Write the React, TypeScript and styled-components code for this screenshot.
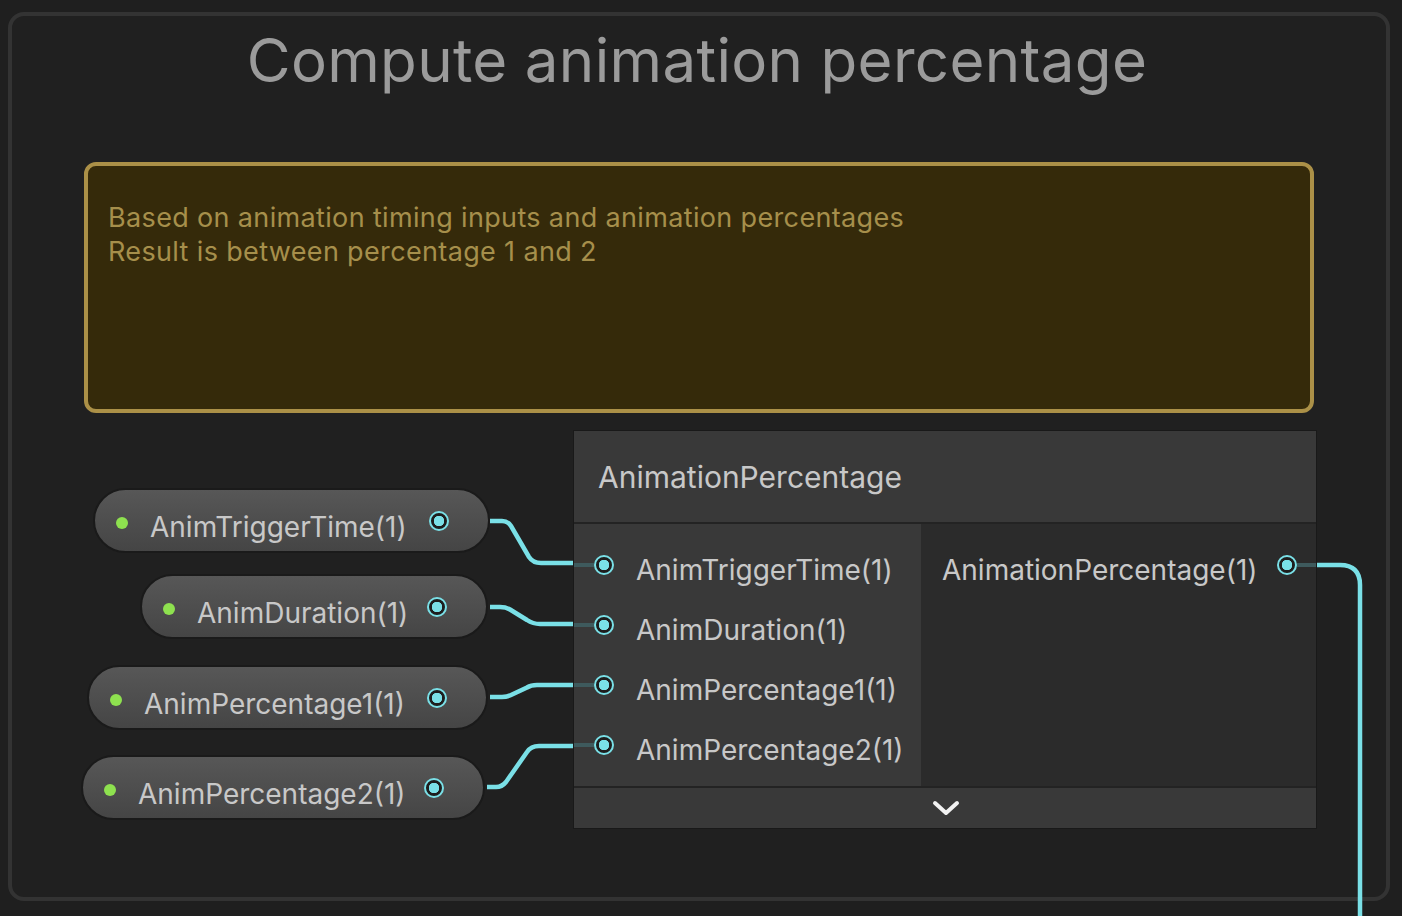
import React from 'react';
import styled, { createGlobalStyle } from 'styled-components';

const GlobalStyle = createGlobalStyle`
  html, body {
    margin: 0;
    padding: 0;
    background: #1f1f1f;
    font-family: Inter, "Noto Sans", "Liberation Sans", sans-serif;
  }
`;

const CYAN = '#7ae0e7';
const STUB = '#3e5a5d';

interface PropertyNode {
  label: string;
  x: number;
  y: number;
  w: number;
}

const properties: PropertyNode[] = [
  { label: 'AnimTriggerTime(1)', x: 93, y: 488, w: 397 },
  { label: 'AnimDuration(1)', x: 140, y: 574, w: 348 },
  { label: 'AnimPercentage1(1)', x: 87, y: 665, w: 401 },
  { label: 'AnimPercentage2(1)', x: 81, y: 755, w: 404 },
];

const inputs = ['AnimTriggerTime(1)', 'AnimDuration(1)', 'AnimPercentage1(1)', 'AnimPercentage2(1)'];

// wires drawn by hand from the pill outputs to the node inputs
const wires = [
  'M490 521 L502 521 Q508 521 511 526 L529 557 Q533 563 541 563 L575 563',
  'M490 607 L500 607 Q506 607 510 609.5 L527 620 Q533 624 540 624 L575 624',
  'M490 697 L502 697 Q507 697 511 695 L527 687.5 Q531 685 537 685 L575 685',
  'M487 787 L496 787 Q502 787 506 782 L527 752 Q531 746 539 746 L575 746',
  'M1317 565 L1340 565 Q1360 565 1360 585 L1360 920',
];

const Canvas = styled.div`
  position: relative;
  width: 1402px;
  height: 916px;
  overflow: hidden;
  padding-top: 12px;
  box-sizing: border-box;
`;

const GroupFrame = styled.div`
  margin-left: 8px;
  width: 1382px;
  height: 889px;
  box-sizing: border-box;
  border: 4px solid #333333;
  border-radius: 16px;
  background: #202020;
  padding-top: 8px;
`;

const GroupTitle = styled.div`
  font-size: 60px;
  line-height: 72px;
  letter-spacing: 0.33px;
  color: #9b9b9b;
  text-align: center;
  padding-right: 4px;
`;

const StickyNote = styled.div`
  margin: 66px 0 0 72px;
  width: 1230px;
  height: 251px;
  box-sizing: border-box;
  border: 4px solid #ab9047;
  border-radius: 12px;
  background: #352a0a;
  padding: 35px 20px;
  color: #a68f4b;
  font-size: 27px;
  line-height: 34px;
  letter-spacing: 0.35px;
`;

const WireLayer = styled.svg`
  position: absolute;
  left: 0;
  top: 0;
  pointer-events: none;
  z-index: 1;
`;

const Pill = styled.div<{ $x: number; $y: number; $w: number }>`
  position: absolute;
  left: ${(p) => p.$x}px;
  top: ${(p) => p.$y}px;
  width: ${(p) => p.$w}px;
  height: 65px;
  box-sizing: border-box;
  border: 2px solid #1a1a1a;
  border-radius: 33px;
  background: linear-gradient(#575757, #454545);
  display: flex;
  align-items: center;
  padding: 0 39px 0 21px;
  z-index: 2;
`;

const Dot = styled.span`
  width: 12px;
  height: 12px;
  border-radius: 50%;
  background: #8ee14f;
  margin: 4px 22px 0 0;
  flex-shrink: 0;
`;

const PillLabel = styled.span`
  flex: 1;
  font-size: 28px;
  color: #c8c8c8;
  margin-top: 12px;
  white-space: nowrap;
`;

const Port = styled.span<{ $stub?: 'left' | 'right' }>`
  position: relative;
  width: 20px;
  height: 20px;
  box-sizing: border-box;
  border-radius: 50%;
  border: 2px solid ${CYAN};
  background: radial-gradient(circle, ${CYAN} 0 5px, #1e1e1e 5.5px);
  flex-shrink: 0;

  &::before {
    content: ${(p) => (p.$stub ? "''" : 'none')};
    position: absolute;
    top: 6px;
    height: 4px;
    width: 22px;
    background: ${STUB};
    ${(p) => (p.$stub === 'left' ? 'right: 18px;' : 'left: 18px;')}
  }
`;

const MainNode = styled.div`
  position: absolute;
  left: 574px;
  top: 431px;
  width: 742px;
  box-shadow: 0 0 0 1px #191919;
  z-index: 2;
  display: flex;
  flex-direction: column;
`;

const NodeHeader = styled.div`
  height: 91px;
  background: #393939;
  border-bottom: 2px solid #232323;
  display: flex;
  align-items: center;
  padding-left: 24px;
  font-size: 30px;
  color: #c8c8c8;
`;

const NodeBody = styled.div`
  display: grid;
  grid-template-columns: 347px minmax(0, 1fr);
  height: 262px;
`;

const PortColumn = styled.div<{ $dark?: boolean }>`
  background: ${(p) => (p.$dark ? '#2b2b2b' : '#393939')};
  padding-top: 16px;
  display: flex;
  flex-direction: column;
  overflow: hidden;
`;

const PortRow = styled.div<{ $output?: boolean }>`
  height: 60px;
  display: flex;
  align-items: center;
  justify-content: ${(p) => (p.$output ? 'space-between' : 'flex-start')};
  gap: ${(p) => (p.$output ? '0' : '22px')};
  padding: ${(p) => (p.$output ? '0 19px 0 21px' : '0 0 0 20px')};
  font-size: 28px;
  color: #c8c8c8;
  white-space: nowrap;

  ${Port} {
    margin-bottom: 10px;
  }
`;

const NodeFooter = styled.div`
  height: 40px;
  border-top: 2px solid #232323;
  background: #393939;
  display: flex;
  align-items: center;
  justify-content: center;
  padding-left: 2px;
`;

const Chevron = () => (
  <svg width="28" height="18" viewBox="0 0 28 18">
    <path d="M3 4 L14 14 L25 4" fill="none" stroke="#f2f2f2" strokeWidth="4" strokeLinecap="round" strokeLinejoin="round" />
  </svg>
);

export default function App() {
  return (
    <>
      <GlobalStyle />
      <Canvas>
        <GroupFrame>
          <GroupTitle>Compute animation percentage</GroupTitle>
          <StickyNote>
            Based on animation timing inputs and animation percentages
            <br />
            Result is between percentage 1 and 2
          </StickyNote>
        </GroupFrame>

        <WireLayer width="1402" height="916" viewBox="0 0 1402 916">
          {wires.map((d, i) => (
            <path key={i} d={d} fill="none" stroke={CYAN} strokeWidth="4.5" />
          ))}
        </WireLayer>

        {properties.map((p) => (
          <Pill key={p.label} $x={p.x} $y={p.y} $w={p.w}>
            <Dot />
            <PillLabel>{p.label}</PillLabel>
            <Port />
          </Pill>
        ))}

        <MainNode>
          <NodeHeader>AnimationPercentage</NodeHeader>
          <NodeBody>
            <PortColumn>
              {inputs.map((name) => (
                <PortRow key={name}>
                  <Port $stub="left" />
                  <span>{name}</span>
                </PortRow>
              ))}
            </PortColumn>
            <PortColumn $dark>
              <PortRow $output>
                <span>AnimationPercentage(1)</span>
                <Port $stub="right" />
              </PortRow>
            </PortColumn>
          </NodeBody>
          <NodeFooter>
            <Chevron />
          </NodeFooter>
        </MainNode>
      </Canvas>
    </>
  );
}
